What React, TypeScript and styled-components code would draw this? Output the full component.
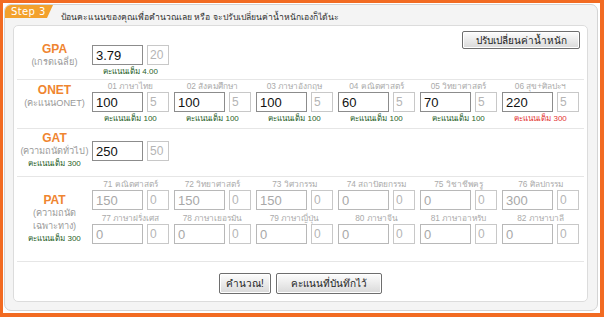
import React from 'react';
import styled, { createGlobalStyle } from 'styled-components';

const GlobalStyle = createGlobalStyle`
  html, body { margin: 0; padding: 0; background: #fff; }
  body { font-family: "Liberation Sans", "DejaVu Sans", sans-serif; }
  * { box-sizing: border-box; }
`;

const Frame = styled.div`
  width: 604px;
  height: 317px;
  border: solid #f26b22;
  border-width: 3px 4px 4px 3px;
  padding: 1px 2px 2px 1px;
  background: #fff;
`;

const Panel = styled.div`
  height: 100%;
  display: flex;
  flex-direction: column;
  background: #f4f4f4;
  border: 1px solid #d4d4d4;
  border-radius: 7px;
  overflow: hidden;
`;

const Header = styled.div`
  height: 20px;
  display: flex;
  align-items: flex-start;
  flex-shrink: 0;
`;

const StepTab = styled.div`
  width: 48px;
  height: 13px;
  padding-left: 6px;
  background: #f3a12c;
  color: #fff;
  font: 10px/13px "DejaVu Sans", sans-serif;
  letter-spacing: 0.4px;
  clip-path: polygon(0 0, 100% 0, calc(100% - 6px) 100%, 0 100%);
`;

const Intro = styled.div`
  margin: 6px 0 0 8px;
  font-size: 8.6px;
  line-height: 12px;
  color: #333;
`;

const Box = styled.div`
  flex: 1;
  margin: 0 9px 8px 8px;
  background: #fff;
  border: 1px solid #dcdcdc;
  border-radius: 5px;
  display: flex;
  flex-direction: column;
`;

const Row = styled.div<{ $h: number; $pad: number; $last?: boolean }>`
  display: flex;
  align-items: flex-start;
  height: ${({ $h }) => $h}px;
  padding-top: ${({ $pad }) => $pad}px;
  margin: 0 3px;
  border-bottom: ${({ $last }) => ($last ? 'none' : '1px solid #e6e6e6')};
  flex-shrink: 0;
`;

const RowLabel = styled.div<{ $pad: number }>`
  width: 75px;
  flex-shrink: 0;
  display: flex;
  flex-direction: column;
  align-items: center;
  margin-top: ${({ $pad }) => $pad}px;
`;

const Title = styled.div`
  color: #ef8530;
  font-weight: bold;
  font-size: 12px;
  line-height: 13px;
`;

const Sub = styled.div`
  color: #9a9a9a;
  font-size: 9.2px;
  line-height: 13px;
  white-space: nowrap;
`;

const Full = styled.div<{ $color?: string }>`
  color: ${({ $color }) => $color || '#2b5f2b'};
  font-size: 8px;
  line-height: 11px;
  white-space: nowrap;
`;

const Fields = styled.div<{ $cols: number; $top?: number }>`
  display: grid;
  grid-template-columns: repeat(${({ $cols }) => $cols}, 77px);
  column-gap: 5px;
  row-gap: 2px;
  margin-top: ${({ $top }) => $top || 0}px;
`;

const Field = styled.div`
  width: 77px;
  display: flex;
  flex-direction: column;
  align-items: center;
`;

const Caption = styled.div`
  height: 12px;
  font-size: 8.3px;
  line-height: 12px;
  color: #aaa;
  white-space: nowrap;
`;

const Pair = styled.div`
  display: flex;
  gap: 4px;
  width: 77px;
`;

const ScoreInput = styled.input<{ $muted?: boolean }>`
  width: 51px;
  height: 20px;
  padding: 0 3px;
  border: 1px solid ${({ $muted }) => ($muted ? '#b8b8b8' : '#8c8c8c')};
  border-radius: 0;
  background: #fff;
  color: ${({ $muted }) => ($muted ? '#a8a8a8' : '#111')};
  font: 13px "Liberation Sans", sans-serif;
  outline: none;
`;

const WeightInput = styled.input`
  width: 22px;
  height: 20px;
  padding: 0 2px;
  border: 1px solid #c8c8c8;
  border-radius: 0;
  background: #fff;
  color: #b5b5b5;
  font: 12px "Liberation Sans", sans-serif;
  outline: none;
`;

const Note = styled(Full)`
  margin-top: 1px;
`;

const Spacer = styled.div`
  flex: 1;
`;

const Button = styled.button<{ $w: number; $h: number }>`
  width: ${({ $w }) => $w}px;
  height: ${({ $h }) => $h}px;
  padding: 0;
  border: 1px solid #6e6e6e;
  border-radius: 2px;
  background: linear-gradient(#fdfdfd, #d9d9d9);
  box-shadow: inset 0 0 0 1px #fff;
  color: #222;
  font: 10px "Liberation Sans", "DejaVu Sans", sans-serif;
  white-space: nowrap;
  cursor: pointer;
`;

const WeightButton = styled(Button)`
  margin: 5px 4px 0 0;
`;

const Actions = styled.div`
  flex: 1;
  display: flex;
  justify-content: center;
  gap: 5px;
`;

type Item = { cap?: string; v: string; w: string; full?: string; red?: boolean };

const ONET: Item[] = [
  { cap: '01 ภาษาไทย', v: '100', w: '5', full: '100' },
  { cap: '02 สังคมศึกษา', v: '100', w: '5', full: '100' },
  { cap: '03 ภาษาอังกฤษ', v: '100', w: '5', full: '100' },
  { cap: '04 คณิตศาสตร์', v: '60', w: '5', full: '100' },
  { cap: '05 วิทยาศาสตร์', v: '70', w: '5', full: '100' },
  { cap: '06 สุข+ศิลปะฯ', v: '220', w: '5', full: '300', red: true },
];

const PAT: Item[] = [
  { cap: '71 คณิตศาสตร์', v: '150', w: '0' },
  { cap: '72 วิทยาศาสตร์', v: '150', w: '0' },
  { cap: '73 วิศวกรรม', v: '150', w: '0' },
  { cap: '74 สถาปัตยกรรม', v: '0', w: '0' },
  { cap: '75 วิชาชีพครู', v: '0', w: '0' },
  { cap: '76 ศิลปกรรม', v: '300', w: '0' },
  { cap: '77 ภาษาฝรั่งเศส', v: '0', w: '0' },
  { cap: '78 ภาษาเยอรมัน', v: '0', w: '0' },
  { cap: '79 ภาษาญี่ปุ่น', v: '0', w: '0' },
  { cap: '80 ภาษาจีน', v: '0', w: '0' },
  { cap: '81 ภาษาอาหรับ', v: '0', w: '0' },
  { cap: '82 ภาษาบาลี', v: '0', w: '0' },
];

const ScoreField: React.FC<{ item: Item; muted?: boolean }> = ({ item, muted }) => (
  <Field>
    {item.cap && <Caption>{item.cap}</Caption>}
    <Pair>
      <ScoreInput $muted={muted} defaultValue={item.v} />
      <WeightInput defaultValue={item.w} />
    </Pair>
    {item.full && <Note $color={item.red ? '#e43434' : undefined}>คะแนนเต็ม {item.full}</Note>}
  </Field>
);

export default function App() {
  return (
    <>
      <GlobalStyle />
      <Frame>
        <Panel>
          <Header>
            <StepTab>Step 3</StepTab>
            <Intro>ป้อนคะแนนของคุณเพื่อคำนวณเลย หรือ จะปรับเปลี่ยนค่าน้ำหนักเองก็ได้นะ</Intro>
          </Header>
          <Box>
            <Row $h={54} $pad={0}>
              <RowLabel $pad={17}>
                <Title>GPA</Title>
                <Sub>(เกรดเฉลี่ย)</Sub>
              </RowLabel>
              <Fields $cols={1} $top={19}>
                <ScoreField item={{ v: '3.79', w: '20', full: '4.00' }} />
              </Fields>
              <Spacer />
              <WeightButton $w={118} $h={18}>ปรับเปลี่ยนค่าน้ำหนัก</WeightButton>
            </Row>
            <Row $h={49} $pad={0}>
              <RowLabel $pad={4}>
                <Title>ONET</Title>
                <Sub>(คะแนนONET)</Sub>
              </RowLabel>
              <Fields $cols={6}>
                {ONET.map((it) => (
                  <ScoreField key={it.cap} item={it} />
                ))}
              </Fields>
            </Row>
            <Row $h={48} $pad={12}>
              <RowLabel $pad={-9}>
                <Title>GAT</Title>
                <Sub>(ความถนัดทั่วไป)</Sub>
                <Full>คะแนนเต็ม 300</Full>
              </RowLabel>
              <Fields $cols={1}>
                <ScoreField item={{ v: '250', w: '50' }} />
              </Fields>
            </Row>
            <Row $h={85} $pad={1}>
              <RowLabel $pad={16}>
                <Title>PAT</Title>
                <Sub>(ความถนัด</Sub>
                <Sub>เฉพาะทาง)</Sub>
                <Full>คะแนนเต็ม 300</Full>
              </RowLabel>
              <Fields $cols={6}>
                {PAT.map((it) => (
                  <ScoreField key={it.cap} item={it} muted />
                ))}
              </Fields>
            </Row>
            <Row $h={39} $pad={11} $last>
              <Actions>
                <Button $w={52} $h={21}>คำนวณ!</Button>
                <Button $w={106} $h={21}>คะแนนที่บันทึกไว้</Button>
              </Actions>
            </Row>
          </Box>
        </Panel>
      </Frame>
    </>
  );
}
